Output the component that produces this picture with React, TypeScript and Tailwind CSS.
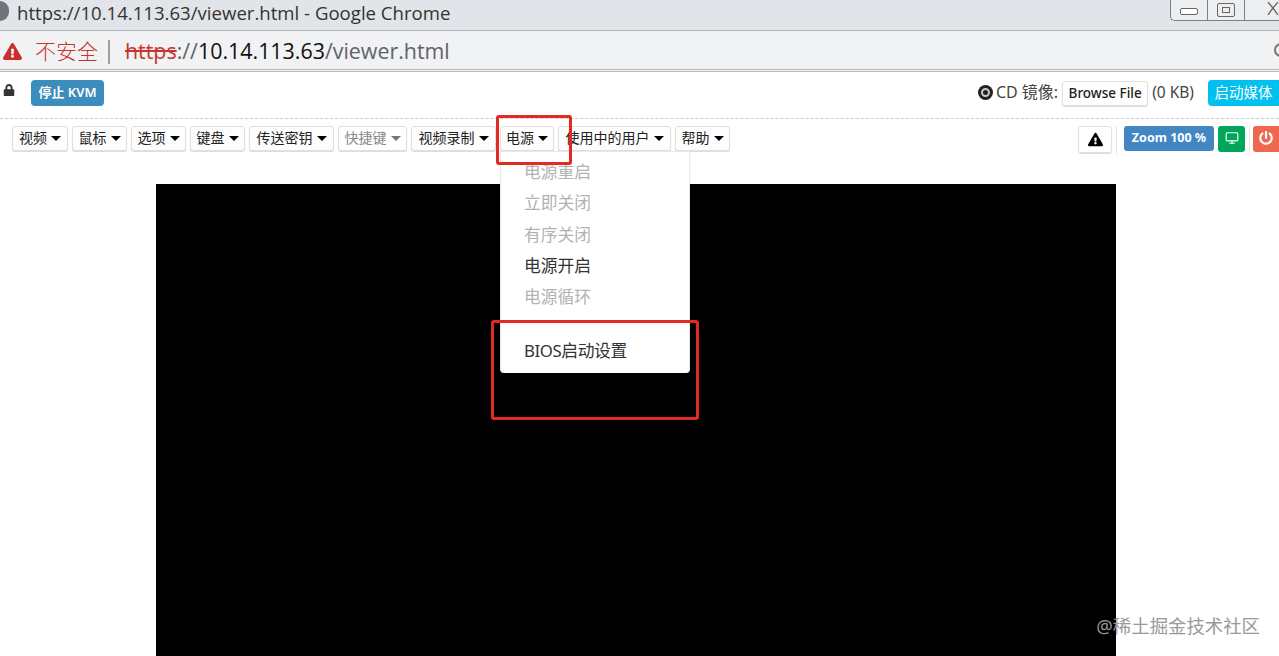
import { FaLock, FaExclamationTriangle, FaPowerOff } from "react-icons/fa";
import { Monitor } from "lucide-react";

const cjk = "font-['Noto_Sans','Noto_Sans_CJK_SC',sans-serif]";

const Caret = ({ muted }: { muted?: boolean }) => (
    <span
        className={`ml-[4px] inline-block w-0 h-0 border-x-[5px] border-x-transparent border-t-[5px] ${muted ? "border-t-[#777]" : "border-t-black"}`}
    />
);

const menus = [
    { label: "视频", width: "w-[56px]" },
    { label: "鼠标", width: "w-[55px]" },
    { label: "选项", width: "w-[55px]" },
    { label: "键盘", width: "w-[55px]" },
    { label: "传送密钥", width: "w-[85px]" },
    { label: "快捷键", width: "w-[69px]", muted: true },
    { label: "视频录制", width: "w-[85px]" },
    { label: "电源", width: "w-[54px]" },
    { label: "使用中的用户", width: "w-[113px]" },
    { label: "帮助", width: "w-[55px]" },
];

const MenuButton = ({ label, width, muted }: { label: string; width: string; muted?: boolean }) => (
    <div
        className={`${width} h-[25px] flex items-center justify-center rounded-[3px] border border-[#e0e0e0] shadow-[0_1px_1px_rgba(0,0,0,0.15)] text-[14px] ${muted ? "text-[#888] bg-white" : "text-[#222] bg-[#fdfdfd]"}`}
    >
        <span className="whitespace-nowrap mb-[2px]">{label}</span>
        <Caret muted={muted} />
    </div>
);

const powerItems = [
    { label: "电源重启", muted: true },
    { label: "立即关闭", muted: true },
    { label: "有序关闭", muted: true },
    { label: "电源开启", muted: false },
    { label: "电源循环", muted: true },
];

const TitleBar = () => (
    <div className="h-[31px] flex items-center bg-[#e1e4e8] border-b border-[#b4b6b9] relative overflow-hidden">
        <div className="w-[9px] h-[20px] mb-[8px] rounded-r-full bg-[#70747a] shrink-0" />
        <div className="ml-[8px] mb-[5px] text-[18.6px] text-[#333] font-['Open_Sans',sans-serif] whitespace-nowrap">
            https://10.14.113.63/viewer.html - Google Chrome
        </div>
        <div className="absolute right-0 top-0 w-[109px] h-[21px] flex border-l border-b border-[#7d8085] rounded-bl-[5px] bg-[#eceef0]">
            <div className="w-[37px] flex items-center justify-center border-r border-[#7d8085]">
                <div className="w-[18px] h-[7px] mt-[3px] rounded-[2px] border border-[#666] bg-white" />
            </div>
            <div className="w-[38px] flex items-center justify-center border-r border-[#7d8085]">
                <div className="w-[18px] h-[14px] rounded-[2px] border border-[#666] flex items-center justify-center">
                    <div className="w-[8px] h-[6px] border border-[#666]" />
                </div>
            </div>
            <svg className="ml-[22px] mt-[1px]" width="12" height="15" viewBox="0 0 12 15" fill="none" stroke="#666" strokeWidth="1.4">
                <path d="M1 1 L6 7 L1 14 M11 1 L6 7 L11 14" />
            </svg>
        </div>
    </div>
);

const AddressBar = () => (
    <div className="h-[41px] flex items-center bg-[#f1f2f4] border-b-[3px] border-double border-[#b9babc] font-['Open_Sans','Noto_Sans_CJK_SC',sans-serif] relative overflow-hidden">
        <FaExclamationTriangle className="ml-[3px] mt-[3px] text-[#c9302c]" size={19} />
        <span className="ml-[13px] mt-[1px] text-[21px] text-[#c9352c] font-['Noto_Sans_CJK_SC',sans-serif] font-light">不安全</span>
        <span className="ml-[10px] mt-[3px] w-[2px] h-[24px] bg-[#a0a0a0]" />
        <div className="ml-[15px] mt-[3px] text-[21.4px] text-[#5f6368] whitespace-nowrap">
            <span className="text-[#c9352c] line-through">https</span>
            ://
            <span className="text-[#111]">10.14.113.63</span>
            /viewer.html
        </div>
        <div className="absolute right-[-9px] top-[12px] w-[14px] h-[14px] rounded-full border-2 border-[#777]" />
    </div>
);

const TopRow = () => (
    <div className={`h-[47px] pt-[8px] flex items-start border-b border-dashed border-[#ccc] ${cjk}`}>
        <FaLock className="ml-[3px] mt-[4px] text-[#333]" size={12} />
        <div className="ml-[16px] w-[73px] h-[26px] flex items-center justify-center rounded-[4px] bg-[#3c8dbc] text-white text-[13px] font-semibold">
            停止 KVM
        </div>
        <div className="ml-auto h-[26px] flex items-center">
            <div className="w-[15px] h-[15px] mb-[2px] rounded-full bg-[#222] flex items-center justify-center mr-[3px]">
                <div className="w-[9px] h-[9px] rounded-full border-2 border-[#ccc]" />
            </div>
            <span className="text-[16px] text-[#444] whitespace-nowrap mb-[3px]">CD 镜像:</span>
            <div className="ml-[4px] w-[86px] h-[25px] flex items-center justify-center rounded-[3px] border border-[#e0e0e0] shadow-[0_1px_1px_rgba(0,0,0,0.15)] text-[13.5px] font-medium text-[#222] whitespace-nowrap">
                Browse File
            </div>
            <span className="ml-[4px] text-[15.5px] text-[#444] whitespace-nowrap mb-[1px]">(0 KB)</span>
            <div className="ml-[14px] w-[71px] h-[26px] flex items-center justify-center rounded-l-[4px] bg-[#00c0ef] text-white text-[14.5px]">
                启动媒体
            </div>
        </div>
    </div>
);

const MenuRow = () => (
    <div className={`h-[65px] pt-[7px] pl-[12px] flex items-start gap-[4px] ${cjk}`}>
        {menus.map((m) => (
            <MenuButton key={m.label} label={m.label} width={m.width} muted={m.muted} />
        ))}
        <div className="ml-auto flex items-start">
            <div className="w-[34px] h-[27px] flex items-center justify-center rounded-[3px] border border-[#e0e0e0] shadow-[0_1px_1px_rgba(0,0,0,0.15)]">
                <FaExclamationTriangle className="text-black" size={15} />
            </div>
            <div className="ml-[4px] w-px h-[29px] bg-[#e6e6e6]" />
            <div className="ml-[7px] w-[90px] h-[25px] flex items-center justify-center rounded-[3px] bg-[#4286c4] text-white text-[12.5px] font-bold whitespace-nowrap">
                Zoom 100 %
            </div>
            <div className="ml-[4px] w-[27px] h-[26px] flex items-center justify-center rounded-[3px] bg-[#00a65a] text-white">
                <Monitor size={14} strokeWidth={2} className="mb-[3px]" />
            </div>
            <div className="ml-[4px] w-px h-[29px] bg-[#e6e6e6]" />
            <div className="ml-[3px] w-[26px] h-[26px] flex items-center justify-center rounded-l-[3px] bg-[#f0674f] text-white">
                <FaPowerOff size={14} className="mb-[2px]" />
            </div>
        </div>
    </div>
);

const PowerMenu = () => (
    <div className={`absolute left-[500px] top-[151px] w-[190px] h-[222px] pt-[4px] bg-white rounded-b-[4px] border-x border-t border-[#e8e8e8] shadow-[0_1px_2px_rgba(0,0,0,0.1)] ${cjk}`}>
        {powerItems.map((item) => (
            <div
                key={item.label}
                className={`h-[31.3px] pl-[23px] flex items-center text-[16.8px] ${item.muted ? "text-[#b2b2b2]" : "text-[#333]"}`}
            >
                {item.label}
            </div>
        ))}
        <div className="mt-[23px] h-[31px] pl-[23px] flex items-center text-[16.8px] text-[#333]">
            <span className="tracking-[-0.4px]">BIOS启动设置</span>
        </div>
    </div>
);

export default function App() {
    return (
        <div className="relative w-[1279px] h-[656px] overflow-hidden bg-white">
            <TitleBar />
            <AddressBar />
            <TopRow />
            <MenuRow />
            <div className="ml-[156px] w-[960px] h-[472px] bg-black" />
            <PowerMenu />
            <div className="absolute left-[496px] top-[115px] w-[76px] h-[50px] rounded-[3px] border-[3px] border-[#e12a20]" />
            <div className="absolute left-[491px] top-[320px] w-[208px] h-[100px] rounded-[3px] border-[3px] border-[#e12a20]" />
            <div className={`absolute right-[19px] top-[612px] text-[18.4px] text-[#999] whitespace-nowrap ${cjk}`}>@稀土掘金技术社区</div>
        </div>
    );
}
